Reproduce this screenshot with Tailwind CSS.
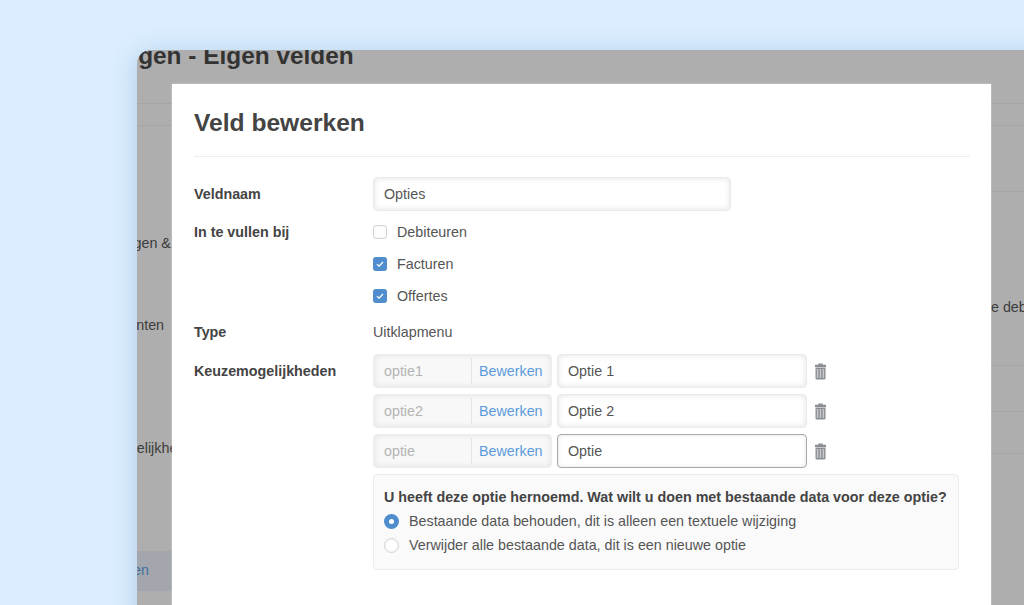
<!DOCTYPE html>
<html>
<head>
<meta charset="utf-8">
<script src="https://cdn.jsdelivr.net/npm/@tailwindcss/browser@4"></script>
</head>
<body class="m-0">
<div class="relative w-[1024px] h-[605px] overflow-hidden bg-[#dbedfe] font-['Liberation_Sans',Arial,sans-serif] pl-[137px] pt-[50px]">
  <div class="relative w-[1000px] h-[600px] bg-[#aeaeae] rounded-tl-[14px] overflow-hidden shadow-[0_4px_24px_rgba(90,140,190,0.35)]">
    <div class="h-[54px] border-b border-[#a5a5a5] overflow-hidden">
      <p class="ml-[-91px] mt-[-8px] text-[24.4px] leading-[28px] font-bold text-[#333] whitespace-nowrap">Instellingen - Eigen velden</p>
    </div>
    <div class="h-[22px] border-b border-[#a5a5a5]"></div>
    <div class="absolute left-[-52px] top-[185px] text-[14.3px] leading-4 text-[#3c3c3c] whitespace-nowrap">Instellingen &amp;</div>
    <div class="absolute left-[-54px] top-[267px] text-[14.3px] leading-4 text-[#3c3c3c] whitespace-nowrap">Documenten</div>
    <div class="absolute left-[-28px] top-[390px] text-[14.3px] leading-4 text-[#3c3c3c] whitespace-nowrap">Mogelijkheden</div>
    <div class="absolute left-0 top-[501px] w-[35px] h-[40px] bg-[#a3a7ad] text-[14.3px] leading-[38px] text-[#3f6f9f] overflow-hidden"><span class="block ml-[-4px]">en</span></div>
    <div class="absolute left-[854px] right-0 top-[141px] border-t border-[#a5a5a5]"></div>
    <div class="absolute left-[854px] top-[249px] text-[14.3px] leading-4 text-[#3c3c3c] whitespace-nowrap">e debiteuren</div>
    <div class="absolute left-[854px] right-0 top-[315px] border-t border-[#a5a5a5]"></div>
    <div class="absolute left-[854px] right-0 top-[361px] border-t border-[#a5a5a5]"></div>
    <div class="absolute left-[854px] right-0 top-[403px] border-t border-[#a5a5a5]"></div>

    <div class="absolute left-[35px] top-[34px] w-[819px] h-[560px] bg-white px-[22px] shadow-[0_0_2px_rgba(255,255,255,0.45)] text-[14.3px] text-[#555]">
      <h1 class="h-[73px] mr-[-1px] border-b border-[#eeeeee] text-[24.6px] leading-[78px] font-bold text-[#444]">Veld bewerken</h1>

      <div class="flex mt-[20px] h-[34px] items-center">
        <label class="w-[179px] pt-[2px] font-bold text-[#444]">Veldnaam</label>
        <div class="w-[358px] h-[34px] px-[10px] rounded-[4px] border border-[#eaeaea] shadow-[inset_0_0_6px_rgba(0,0,0,0.12)] leading-[32px]">Opties</div>
      </div>

      <div class="flex mt-[5px]">
        <label class="w-[179px] font-bold text-[#444] leading-[32px]">In te vullen bij</label>
        <div class="flex flex-col">
          <div class="flex items-center h-[32px] gap-[10px]">
            <span class="w-[14px] h-[14px] rounded-[3px] border border-[#d5d5d5] shadow-[inset_0_0_2px_rgba(0,0,0,0.12)]"></span><span class="pt-[2px]">Debiteuren</span>
          </div>
          <div class="flex items-center h-[32px] gap-[10px]">
            <span class="w-[14px] h-[14px] rounded-[3px] bg-[#4f8dcc] flex items-center justify-center"><svg width="12" height="12" viewBox="0 0 12 12" fill="none"><path d="M3 6.2 5.2 8.2 9 4" stroke="#fff" stroke-width="1.3"/></svg></span><span class="pt-[2px]">Facturen</span>
          </div>
          <div class="flex items-center h-[32px] gap-[10px]">
            <span class="w-[14px] h-[14px] rounded-[3px] bg-[#4f8dcc] flex items-center justify-center"><svg width="12" height="12" viewBox="0 0 12 12" fill="none"><path d="M3 6.2 5.2 8.2 9 4" stroke="#fff" stroke-width="1.3"/></svg></span><span class="pt-[2px]">Offertes</span>
          </div>
        </div>
      </div>

      <div class="flex mt-[1px] h-[40px] items-center">
        <label class="w-[179px] font-bold text-[#444]">Type</label>
        <div>Uitklapmenu</div>
      </div>

      <div class="flex mt-[1px]">
        <label class="w-[179px] font-bold text-[#444] leading-[34px]">Keuzemogelijkheden</label>
        <div class="flex flex-col w-[586px]">
          <div class="flex items-center h-[34px]">
            <div class="flex items-center w-[179px] h-[34px] rounded-[4px] bg-[#f8f8f8] border border-[#eeeeee] shadow-[inset_0_0_6px_rgba(0,0,0,0.1)]">
              <span class="w-[98px] pl-[10px] text-[#b4b4b4] h-[26px] leading-[26px] border-r border-[#e5e5e5]">optie1</span>
              <span class="pl-[7px] pt-[2px] text-[#5b9bdc]">Bewerken</span>
            </div>
            <div class="ml-[5px] w-[250px] h-[34px] px-[10px] rounded-[4px] border border-[#eaeaea] shadow-[inset_0_0_6px_rgba(0,0,0,0.12)] leading-[32px]">Optie 1</div>
            <svg class="ml-[7px]" width="13" height="17" viewBox="0 0 13 17"><path d="M4.5 0.5h4l.5 1.2h3v2.3H1V1.7h3z" fill="#8b8f94"/><path d="M1.5 4.5h10v11q0 1-1 1h-8q-1 0-1-1z" fill="#8b8f94"/><path d="M3.6 6v9M6.5 6v9M9.4 6v9" stroke="#c8cbce" stroke-width="1.4"/></svg>
          </div>
          <div class="flex items-center h-[34px] mt-[6px]">
            <div class="flex items-center w-[179px] h-[34px] rounded-[4px] bg-[#f8f8f8] border border-[#eeeeee] shadow-[inset_0_0_6px_rgba(0,0,0,0.1)]">
              <span class="w-[98px] pl-[10px] text-[#b4b4b4] h-[26px] leading-[26px] border-r border-[#e5e5e5]">optie2</span>
              <span class="pl-[7px] pt-[2px] text-[#5b9bdc]">Bewerken</span>
            </div>
            <div class="ml-[5px] w-[250px] h-[34px] px-[10px] rounded-[4px] border border-[#eaeaea] shadow-[inset_0_0_6px_rgba(0,0,0,0.12)] leading-[32px]">Optie 2</div>
            <svg class="ml-[7px]" width="13" height="17" viewBox="0 0 13 17"><path d="M4.5 0.5h4l.5 1.2h3v2.3H1V1.7h3z" fill="#8b8f94"/><path d="M1.5 4.5h10v11q0 1-1 1h-8q-1 0-1-1z" fill="#8b8f94"/><path d="M3.6 6v9M6.5 6v9M9.4 6v9" stroke="#c8cbce" stroke-width="1.4"/></svg>
          </div>
          <div class="flex items-center h-[34px] mt-[6px]">
            <div class="flex items-center w-[179px] h-[34px] rounded-[4px] bg-[#f8f8f8] border border-[#eeeeee] shadow-[inset_0_0_6px_rgba(0,0,0,0.1)]">
              <span class="w-[98px] pl-[10px] text-[#b4b4b4] h-[26px] leading-[26px] border-r border-[#e5e5e5]">optie</span>
              <span class="pl-[7px] pt-[2px] text-[#5b9bdc]">Bewerken</span>
            </div>
            <div class="ml-[5px] w-[250px] h-[34px] px-[10px] rounded-[4px] border border-[#a8a8a8] shadow-[inset_0_0_4px_rgba(0,0,0,0.12)] leading-[32px]">Optie</div>
            <svg class="ml-[7px]" width="13" height="17" viewBox="0 0 13 17"><path d="M4.5 0.5h4l.5 1.2h3v2.3H1V1.7h3z" fill="#8b8f94"/><path d="M1.5 4.5h10v11q0 1-1 1h-8q-1 0-1-1z" fill="#8b8f94"/><path d="M3.6 6v9M6.5 6v9M9.4 6v9" stroke="#c8cbce" stroke-width="1.4"/></svg>
          </div>
          <div class="mt-[6px] h-[96px] rounded-[4px] border border-[#ececec] bg-[#fafafa] px-[10px] pt-[14px]">
            <p class="font-bold text-[#444] leading-[17px] whitespace-nowrap">U heeft deze optie hernoemd. Wat wilt u doen met bestaande data voor deze optie?</p>
            <div class="flex items-center mt-[3px] h-[24px] gap-[10px]">
              <span class="w-[15px] h-[15px] rounded-full bg-[#4f8dcc] flex items-center justify-center"><span class="w-[5px] h-[5px] rounded-full bg-white"></span></span><span class="pt-[2px]">Bestaande data behouden, dit is alleen een textuele wijziging</span>
            </div>
            <div class="flex items-center h-[24px] gap-[10px]">
              <span class="w-[15px] h-[15px] rounded-full bg-white border border-[#d5d5d5] shadow-[inset_0_0_2px_rgba(0,0,0,0.12)]"></span><span class="pt-[2px]">Verwijder alle bestaande data, dit is een nieuwe optie</span>
            </div>
          </div>
        </div>
      </div>
    </div>
  </div>
</div>
</body>
</html>
